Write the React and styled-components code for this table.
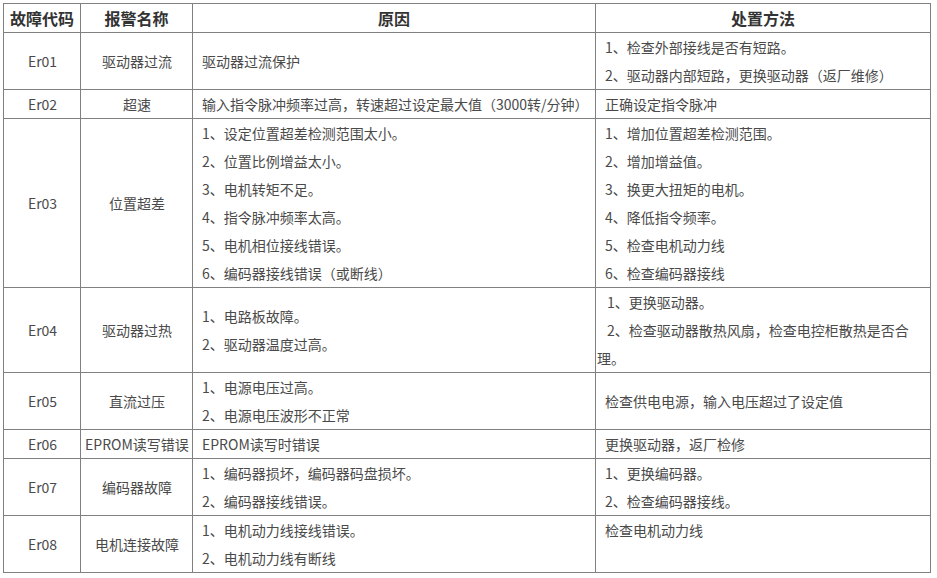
import React from "react";
import styled, { createGlobalStyle } from "styled-components";

const GlobalStyle = createGlobalStyle`
  html, body {
    margin: 0;
    padding: 0;
    background: #ffffff;
  }
`;

const Page = styled.div`
  padding: 3px 0 0 3px;
  font-family: "Noto Sans CJK SC", "Microsoft YaHei", sans-serif;
`;

const Table = styled.table`
  border-collapse: collapse;
  table-layout: fixed;
  width: 927px;
  color: #4a4a4a;
  font-size: 14px;
`;

const Head = styled.th`
  border: 1px solid #808080;
  height: 28px;
  padding: 0;
  font-size: 16px;
  font-weight: bold;
  line-height: 28px;
  color: #333333;
  text-align: center;
`;

const Cell = styled.td`
  border: 1px solid #808080;
  padding: 0 0 0 1px;
  line-height: 28px;
  vertical-align: middle;
  text-align: ${(p) => (p.$center ? "center" : "left")};
  white-space: ${(p) => (p.$center ? "nowrap" : "normal")};
`;

const Line = styled.p`
  margin: 0;
  text-indent: ${(p) => p.$indent ?? 8}px;
  min-height: 28px;
`;

const rows = [
  {
    code: "Er01",
    name: "驱动器过流",
    cause: ["驱动器过流保护"],
    fix: ["1、检查外部接线是否有短路。", "2、驱动器内部短路，更换驱动器（返厂维修）"],
  },
  {
    code: "Er02",
    name: "超速",
    cause: ["输入指令脉冲频率过高，转速超过设定最大值（3000转/分钟）"],
    fix: ["正确设定指令脉冲"],
  },
  {
    code: "Er03",
    name: "位置超差",
    cause: [
      "1、设定位置超差检测范围太小。",
      "2、位置比例增益太小。",
      "3、电机转矩不足。",
      "4、指令脉冲频率太高。",
      "5、电机相位接线错误。",
      "6、编码器接线错误（或断线）",
    ],
    fix: [
      "1、增加位置超差检测范围。",
      "2、增加增益值。",
      "3、换更大扭矩的电机。",
      "4、降低指令频率。",
      "5、检查电机动力线",
      "6、检查编码器接线",
    ],
  },
  {
    code: "Er04",
    name: "驱动器过热",
    cause: ["1、电路板故障。", "2、驱动器温度过高。"],
    fix: ["1、更换驱动器。", "2、检查驱动器散热风扇，检查电控柜散热是否合理。"],
    fixIndent: 10,
  },
  {
    code: "Er05",
    name: "直流过压",
    cause: ["1、电源电压过高。", "2、电源电压波形不正常"],
    fix: ["检查供电电源，输入电压超过了设定值"],
  },
  {
    code: "Er06",
    name: "EPROM读写错误",
    cause: ["EPROM读写时错误"],
    fix: ["更换驱动器，返厂检修"],
  },
  {
    code: "Er07",
    name: "编码器故障",
    cause: ["1、编码器损坏，编码器码盘损坏。", "2、编码器接线错误。"],
    fix: ["1、更换编码器。", "2、检查编码器接线。"],
  },
  {
    code: "Er08",
    name: "电机连接故障",
    cause: ["1、电机动力线接线错误。", "2、电机动力线有断线"],
    fix: ["检查电机动力线", "\u00a0"],
  },
];

export default function App() {
  return (
    <Page>
      <GlobalStyle />
      <Table>
        <colgroup>
          <col style={{ width: 77 }} />
          <col style={{ width: 112 }} />
          <col style={{ width: 403 }} />
          <col style={{ width: 335 }} />
        </colgroup>
        <thead>
          <tr>
            <Head>故障代码</Head>
            <Head>报警名称</Head>
            <Head>原因</Head>
            <Head>处置方法</Head>
          </tr>
        </thead>
        <tbody>
          {rows.map((r) => (
            <tr key={r.code}>
              <Cell $center>{r.code}</Cell>
              <Cell $center>{r.name}</Cell>
              <Cell>
                {r.cause.map((t, i) => (
                  <Line key={i}>{t}</Line>
                ))}
              </Cell>
              <Cell>
                {r.fix.map((t, i) => (
                  <Line key={i} $indent={r.fixIndent}>
                    {t}
                  </Line>
                ))}
              </Cell>
            </tr>
          ))}
        </tbody>
      </Table>
    </Page>
  );
}
